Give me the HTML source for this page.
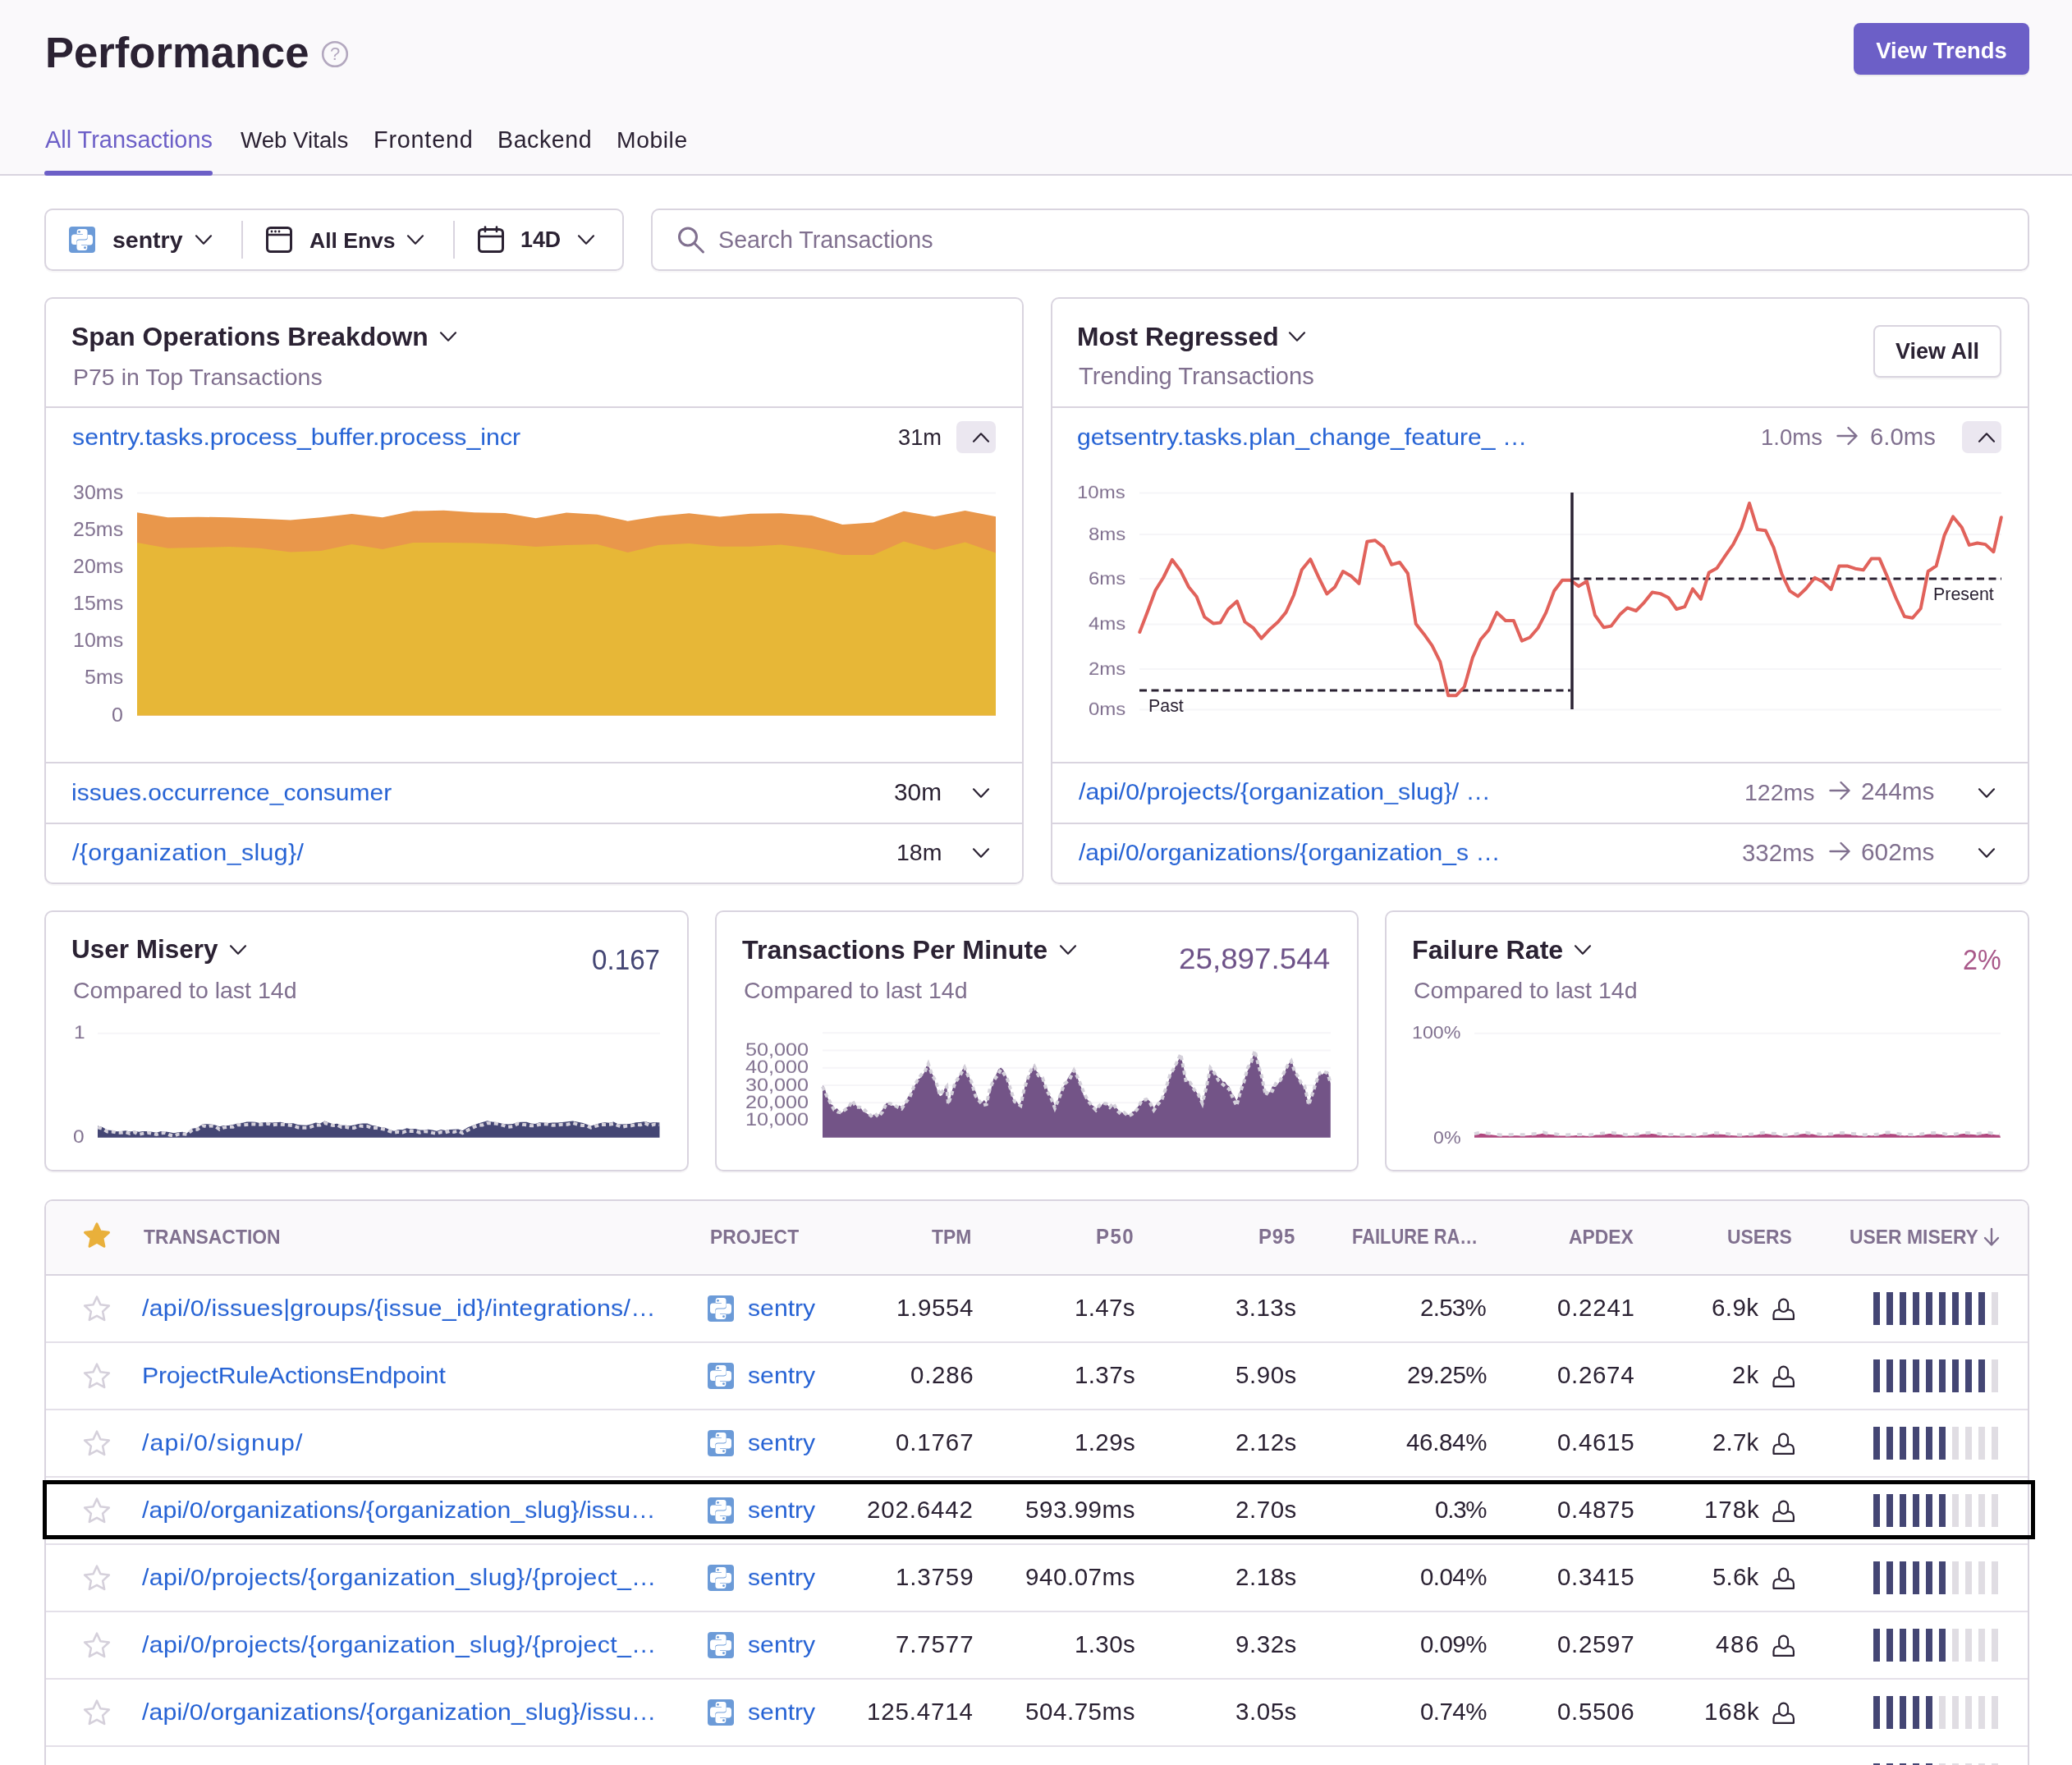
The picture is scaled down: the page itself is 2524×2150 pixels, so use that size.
<!DOCTYPE html>
<html><head><meta charset="utf-8"><title>Performance</title>
<style>
html,body{margin:0;padding:0;}
body{width:2524px;height:2150px;overflow:hidden;position:relative;background:#fff;font-family:"Liberation Sans",sans-serif;}
.t{position:absolute;white-space:nowrap;line-height:1;will-change:transform;}
svg.ov{position:absolute;left:0;top:0;}
</style></head><body>
<div style="position:absolute;left:0px;top:0px;width:2524px;height:214px;box-sizing:border-box;background:#FAF9FB;border-bottom:2px solid #D9D4DF;"></div><div style="position:absolute;left:2258px;top:28px;width:214px;height:63px;box-sizing:border-box;background:#6C5FC7;border-radius:8px;box-shadow:0 2px 0 rgba(43,34,51,0.08);"></div><div style="position:absolute;left:54px;top:208px;width:205px;height:6px;box-sizing:border-box;background:#6C5FC7;border-radius:3px;"></div><div style="position:absolute;left:54px;top:254px;width:706px;height:76px;box-sizing:border-box;border:2px solid #D9D4DF;border-radius:10px;box-shadow:0 2px 0 rgba(43,34,51,0.04);"></div><div style="position:absolute;left:294px;top:269px;width:2px;height:46px;box-sizing:border-box;background:#D9D4DF;"></div><div style="position:absolute;left:552px;top:269px;width:2px;height:46px;box-sizing:border-box;background:#D9D4DF;"></div><div style="position:absolute;left:793px;top:254px;width:1679px;height:76px;box-sizing:border-box;border:2px solid #D9D4DF;border-radius:10px;box-shadow:0 2px 0 rgba(43,34,51,0.04);"></div><div style="position:absolute;left:54px;top:362px;width:1193px;height:715px;box-sizing:border-box;border:2px solid #D9D4DF;border-radius:10px;box-shadow:0 2px 0 rgba(43,34,51,0.04);"></div><div style="position:absolute;left:56px;top:495px;width:1189px;height:2px;box-sizing:border-box;background:#D9D4DF;"></div><div style="position:absolute;left:1165px;top:513px;width:48px;height:39px;box-sizing:border-box;background:#EBE7F0;border-radius:7px;"></div><div style="position:absolute;left:56px;top:928px;width:1189px;height:2px;box-sizing:border-box;background:#D9D4DF;"></div><div style="position:absolute;left:56px;top:1002px;width:1189px;height:2px;box-sizing:border-box;background:#D9D4DF;"></div><div style="position:absolute;left:1280px;top:362px;width:1192px;height:715px;box-sizing:border-box;border:2px solid #D9D4DF;border-radius:10px;box-shadow:0 2px 0 rgba(43,34,51,0.04);"></div><div style="position:absolute;left:2282px;top:396px;width:156px;height:64px;box-sizing:border-box;border:2px solid #D9D4DF;border-radius:8px;box-shadow:0 2px 2px rgba(43,34,51,0.06);background:#fff;"></div><div style="position:absolute;left:1282px;top:495px;width:1188px;height:2px;box-sizing:border-box;background:#D9D4DF;"></div><div style="position:absolute;left:2390px;top:513px;width:48px;height:39px;box-sizing:border-box;background:#EBE7F0;border-radius:7px;"></div><div style="position:absolute;left:1282px;top:928px;width:1188px;height:2px;box-sizing:border-box;background:#D9D4DF;"></div><div style="position:absolute;left:1282px;top:1002px;width:1188px;height:2px;box-sizing:border-box;background:#D9D4DF;"></div><div style="position:absolute;left:54px;top:1109px;width:785px;height:318px;box-sizing:border-box;border:2px solid #D9D4DF;border-radius:10px;box-shadow:0 2px 0 rgba(43,34,51,0.04);"></div><div style="position:absolute;left:871px;top:1109px;width:784px;height:318px;box-sizing:border-box;border:2px solid #D9D4DF;border-radius:10px;box-shadow:0 2px 0 rgba(43,34,51,0.04);"></div><div style="position:absolute;left:1687px;top:1109px;width:785px;height:318px;box-sizing:border-box;border:2px solid #D9D4DF;border-radius:10px;box-shadow:0 2px 0 rgba(43,34,51,0.04);"></div><div style="position:absolute;left:54px;top:1461px;width:2418px;height:800px;box-sizing:border-box;border:2px solid #D9D4DF;border-radius:10px;box-shadow:0 2px 0 rgba(43,34,51,0.04);"></div><div style="position:absolute;left:56px;top:1463px;width:2414px;height:90px;box-sizing:border-box;background:#FAF9FB;border-radius:8px 8px 0 0;"></div><div style="position:absolute;left:56px;top:1552px;width:2414px;height:2px;box-sizing:border-box;background:#D9D4DF;"></div><div style="position:absolute;left:2282px;top:1574px;width:8px;height:40px;box-sizing:border-box;background:#444674;"></div><div style="position:absolute;left:2298px;top:1574px;width:8px;height:40px;box-sizing:border-box;background:#444674;"></div><div style="position:absolute;left:2314px;top:1574px;width:8px;height:40px;box-sizing:border-box;background:#444674;"></div><div style="position:absolute;left:2330px;top:1574px;width:8px;height:40px;box-sizing:border-box;background:#444674;"></div><div style="position:absolute;left:2346px;top:1574px;width:8px;height:40px;box-sizing:border-box;background:#444674;"></div><div style="position:absolute;left:2362px;top:1574px;width:8px;height:40px;box-sizing:border-box;background:#444674;"></div><div style="position:absolute;left:2378px;top:1574px;width:8px;height:40px;box-sizing:border-box;background:#444674;"></div><div style="position:absolute;left:2394px;top:1574px;width:8px;height:40px;box-sizing:border-box;background:#444674;"></div><div style="position:absolute;left:2410px;top:1574px;width:8px;height:40px;box-sizing:border-box;background:#444674;"></div><div style="position:absolute;left:2426px;top:1574px;width:8px;height:40px;box-sizing:border-box;background:#E0DDE3;"></div><div style="position:absolute;left:56px;top:1634px;width:2414px;height:2px;box-sizing:border-box;background:#E4E0E9;"></div><div style="position:absolute;left:2282px;top:1656px;width:8px;height:40px;box-sizing:border-box;background:#444674;"></div><div style="position:absolute;left:2298px;top:1656px;width:8px;height:40px;box-sizing:border-box;background:#444674;"></div><div style="position:absolute;left:2314px;top:1656px;width:8px;height:40px;box-sizing:border-box;background:#444674;"></div><div style="position:absolute;left:2330px;top:1656px;width:8px;height:40px;box-sizing:border-box;background:#444674;"></div><div style="position:absolute;left:2346px;top:1656px;width:8px;height:40px;box-sizing:border-box;background:#444674;"></div><div style="position:absolute;left:2362px;top:1656px;width:8px;height:40px;box-sizing:border-box;background:#444674;"></div><div style="position:absolute;left:2378px;top:1656px;width:8px;height:40px;box-sizing:border-box;background:#444674;"></div><div style="position:absolute;left:2394px;top:1656px;width:8px;height:40px;box-sizing:border-box;background:#444674;"></div><div style="position:absolute;left:2410px;top:1656px;width:8px;height:40px;box-sizing:border-box;background:#444674;"></div><div style="position:absolute;left:2426px;top:1656px;width:8px;height:40px;box-sizing:border-box;background:#E0DDE3;"></div><div style="position:absolute;left:56px;top:1716px;width:2414px;height:2px;box-sizing:border-box;background:#E4E0E9;"></div><div style="position:absolute;left:2282px;top:1738px;width:8px;height:40px;box-sizing:border-box;background:#444674;"></div><div style="position:absolute;left:2298px;top:1738px;width:8px;height:40px;box-sizing:border-box;background:#444674;"></div><div style="position:absolute;left:2314px;top:1738px;width:8px;height:40px;box-sizing:border-box;background:#444674;"></div><div style="position:absolute;left:2330px;top:1738px;width:8px;height:40px;box-sizing:border-box;background:#444674;"></div><div style="position:absolute;left:2346px;top:1738px;width:8px;height:40px;box-sizing:border-box;background:#444674;"></div><div style="position:absolute;left:2362px;top:1738px;width:8px;height:40px;box-sizing:border-box;background:#444674;"></div><div style="position:absolute;left:2378px;top:1738px;width:8px;height:40px;box-sizing:border-box;background:#E0DDE3;"></div><div style="position:absolute;left:2394px;top:1738px;width:8px;height:40px;box-sizing:border-box;background:#E0DDE3;"></div><div style="position:absolute;left:2410px;top:1738px;width:8px;height:40px;box-sizing:border-box;background:#E0DDE3;"></div><div style="position:absolute;left:2426px;top:1738px;width:8px;height:40px;box-sizing:border-box;background:#E0DDE3;"></div><div style="position:absolute;left:56px;top:1798px;width:2414px;height:2px;box-sizing:border-box;background:#E4E0E9;"></div><div style="position:absolute;left:2282px;top:1820px;width:8px;height:40px;box-sizing:border-box;background:#444674;"></div><div style="position:absolute;left:2298px;top:1820px;width:8px;height:40px;box-sizing:border-box;background:#444674;"></div><div style="position:absolute;left:2314px;top:1820px;width:8px;height:40px;box-sizing:border-box;background:#444674;"></div><div style="position:absolute;left:2330px;top:1820px;width:8px;height:40px;box-sizing:border-box;background:#444674;"></div><div style="position:absolute;left:2346px;top:1820px;width:8px;height:40px;box-sizing:border-box;background:#444674;"></div><div style="position:absolute;left:2362px;top:1820px;width:8px;height:40px;box-sizing:border-box;background:#444674;"></div><div style="position:absolute;left:2378px;top:1820px;width:8px;height:40px;box-sizing:border-box;background:#E0DDE3;"></div><div style="position:absolute;left:2394px;top:1820px;width:8px;height:40px;box-sizing:border-box;background:#E0DDE3;"></div><div style="position:absolute;left:2410px;top:1820px;width:8px;height:40px;box-sizing:border-box;background:#E0DDE3;"></div><div style="position:absolute;left:2426px;top:1820px;width:8px;height:40px;box-sizing:border-box;background:#E0DDE3;"></div><div style="position:absolute;left:56px;top:1880px;width:2414px;height:2px;box-sizing:border-box;background:#E4E0E9;"></div><div style="position:absolute;left:2282px;top:1902px;width:8px;height:40px;box-sizing:border-box;background:#444674;"></div><div style="position:absolute;left:2298px;top:1902px;width:8px;height:40px;box-sizing:border-box;background:#444674;"></div><div style="position:absolute;left:2314px;top:1902px;width:8px;height:40px;box-sizing:border-box;background:#444674;"></div><div style="position:absolute;left:2330px;top:1902px;width:8px;height:40px;box-sizing:border-box;background:#444674;"></div><div style="position:absolute;left:2346px;top:1902px;width:8px;height:40px;box-sizing:border-box;background:#444674;"></div><div style="position:absolute;left:2362px;top:1902px;width:8px;height:40px;box-sizing:border-box;background:#444674;"></div><div style="position:absolute;left:2378px;top:1902px;width:8px;height:40px;box-sizing:border-box;background:#E0DDE3;"></div><div style="position:absolute;left:2394px;top:1902px;width:8px;height:40px;box-sizing:border-box;background:#E0DDE3;"></div><div style="position:absolute;left:2410px;top:1902px;width:8px;height:40px;box-sizing:border-box;background:#E0DDE3;"></div><div style="position:absolute;left:2426px;top:1902px;width:8px;height:40px;box-sizing:border-box;background:#E0DDE3;"></div><div style="position:absolute;left:56px;top:1962px;width:2414px;height:2px;box-sizing:border-box;background:#E4E0E9;"></div><div style="position:absolute;left:2282px;top:1984px;width:8px;height:40px;box-sizing:border-box;background:#444674;"></div><div style="position:absolute;left:2298px;top:1984px;width:8px;height:40px;box-sizing:border-box;background:#444674;"></div><div style="position:absolute;left:2314px;top:1984px;width:8px;height:40px;box-sizing:border-box;background:#444674;"></div><div style="position:absolute;left:2330px;top:1984px;width:8px;height:40px;box-sizing:border-box;background:#444674;"></div><div style="position:absolute;left:2346px;top:1984px;width:8px;height:40px;box-sizing:border-box;background:#444674;"></div><div style="position:absolute;left:2362px;top:1984px;width:8px;height:40px;box-sizing:border-box;background:#444674;"></div><div style="position:absolute;left:2378px;top:1984px;width:8px;height:40px;box-sizing:border-box;background:#E0DDE3;"></div><div style="position:absolute;left:2394px;top:1984px;width:8px;height:40px;box-sizing:border-box;background:#E0DDE3;"></div><div style="position:absolute;left:2410px;top:1984px;width:8px;height:40px;box-sizing:border-box;background:#E0DDE3;"></div><div style="position:absolute;left:2426px;top:1984px;width:8px;height:40px;box-sizing:border-box;background:#E0DDE3;"></div><div style="position:absolute;left:56px;top:2044px;width:2414px;height:2px;box-sizing:border-box;background:#E4E0E9;"></div><div style="position:absolute;left:2282px;top:2066px;width:8px;height:40px;box-sizing:border-box;background:#444674;"></div><div style="position:absolute;left:2298px;top:2066px;width:8px;height:40px;box-sizing:border-box;background:#444674;"></div><div style="position:absolute;left:2314px;top:2066px;width:8px;height:40px;box-sizing:border-box;background:#444674;"></div><div style="position:absolute;left:2330px;top:2066px;width:8px;height:40px;box-sizing:border-box;background:#444674;"></div><div style="position:absolute;left:2346px;top:2066px;width:8px;height:40px;box-sizing:border-box;background:#444674;"></div><div style="position:absolute;left:2362px;top:2066px;width:8px;height:40px;box-sizing:border-box;background:#E0DDE3;"></div><div style="position:absolute;left:2378px;top:2066px;width:8px;height:40px;box-sizing:border-box;background:#E0DDE3;"></div><div style="position:absolute;left:2394px;top:2066px;width:8px;height:40px;box-sizing:border-box;background:#E0DDE3;"></div><div style="position:absolute;left:2410px;top:2066px;width:8px;height:40px;box-sizing:border-box;background:#E0DDE3;"></div><div style="position:absolute;left:2426px;top:2066px;width:8px;height:40px;box-sizing:border-box;background:#E0DDE3;"></div><div style="position:absolute;left:56px;top:2126px;width:2414px;height:2px;box-sizing:border-box;background:#E4E0E9;"></div><div style="position:absolute;left:2282px;top:2148px;width:8px;height:40px;box-sizing:border-box;background:#444674;"></div><div style="position:absolute;left:2298px;top:2148px;width:8px;height:40px;box-sizing:border-box;background:#444674;"></div><div style="position:absolute;left:2314px;top:2148px;width:8px;height:40px;box-sizing:border-box;background:#444674;"></div><div style="position:absolute;left:2330px;top:2148px;width:8px;height:40px;box-sizing:border-box;background:#444674;"></div><div style="position:absolute;left:2346px;top:2148px;width:8px;height:40px;box-sizing:border-box;background:#444674;"></div><div style="position:absolute;left:2362px;top:2148px;width:8px;height:40px;box-sizing:border-box;background:#E0DDE3;"></div><div style="position:absolute;left:2378px;top:2148px;width:8px;height:40px;box-sizing:border-box;background:#E0DDE3;"></div><div style="position:absolute;left:2394px;top:2148px;width:8px;height:40px;box-sizing:border-box;background:#E0DDE3;"></div><div style="position:absolute;left:2410px;top:2148px;width:8px;height:40px;box-sizing:border-box;background:#E0DDE3;"></div><div style="position:absolute;left:2426px;top:2148px;width:8px;height:40px;box-sizing:border-box;background:#E0DDE3;"></div>
<svg class="ov" width="2524" height="2150" viewBox="0 0 2524 2150">
<circle cx="408" cy="66" r="14.8" fill="none" stroke="#B3A8BF" stroke-width="2.6"/><g transform="translate(84,276) scale(1.0)"><rect x="0" y="0" width="32" height="32" rx="4" fill="#6C9BD8"/><path d="M16.9 9.4 L9.7 9.4 L9.7 6.2 Q9.7 3 12.9 3 L19.3 3 Q22.5 3 22.5 6.2 L22.5 12.3 Q22.5 15.5 19.3 15.5 L12.5 15.5 Q9.2 15.5 9.2 18.8 L9.2 21.9 L6.2 21.9 Q3 21.9 3 18.4 L3 13.2 Q3 9.6 6.4 9.6 Z" fill="#fff"/><path d="M16.9 9.4 L9.7 9.4 L9.7 6.2 Q9.7 3 12.9 3 L19.3 3 Q22.5 3 22.5 6.2 L22.5 12.3 Q22.5 15.5 19.3 15.5 L12.5 15.5 Q9.2 15.5 9.2 18.8 L9.2 21.9 L6.2 21.9 Q3 21.9 3 18.4 L3 13.2 Q3 9.6 6.4 9.6 Z" fill="#fff" transform="rotate(180 16 16)"/><line x1="9.7" y1="9.5" x2="16.9" y2="9.5" stroke="#6C9BD8" stroke-width="0.7"/><line x1="15.1" y1="22.5" x2="22.3" y2="22.5" stroke="#6C9BD8" stroke-width="0.7"/><circle cx="12.5" cy="6.3" r="1.4" fill="#6C9BD8"/><circle cx="19.5" cy="25.7" r="1.4" fill="#6C9BD8"/></g><polyline points="239,287.3 248.0,296.7 257,287.3" fill="none" stroke="#2B2233" stroke-width="2.2" stroke-linecap="round" stroke-linejoin="round"/><rect x="325.5" y="277.5" width="29" height="29" rx="4" fill="none" stroke="#2B2233" stroke-width="3"/><line x1="325.5" y1="286" x2="354.5" y2="286" stroke="#2B2233" stroke-width="2.6"/><circle cx="331" cy="282" r="1.4" fill="#2B2233"/><circle cx="335.5" cy="282" r="1.4" fill="#2B2233"/><circle cx="340" cy="282" r="1.4" fill="#2B2233"/><polyline points="497,287.3 506.0,296.7 515,287.3" fill="none" stroke="#2B2233" stroke-width="2.2" stroke-linecap="round" stroke-linejoin="round"/><rect x="583.5" y="279.5" width="29" height="27" rx="4" fill="none" stroke="#2B2233" stroke-width="3"/><line x1="583.5" y1="288" x2="612.5" y2="288" stroke="#2B2233" stroke-width="2.6"/><line x1="591" y1="276.5" x2="591" y2="282" stroke="#2B2233" stroke-width="2.6" stroke-linecap="round"/><line x1="605" y1="276.5" x2="605" y2="282" stroke="#2B2233" stroke-width="2.6" stroke-linecap="round"/><polyline points="705,287.3 714.0,296.7 723,287.3" fill="none" stroke="#2B2233" stroke-width="2.2" stroke-linecap="round" stroke-linejoin="round"/><circle cx="838" cy="288.5" r="10.5" fill="none" stroke="#80708F" stroke-width="3"/><line x1="846" y1="296.5" x2="856.5" y2="307" stroke="#80708F" stroke-width="3" stroke-linecap="round"/><polyline points="537,405.3 546.0,414.7 555,405.3" fill="none" stroke="#2B2233" stroke-width="2.2" stroke-linecap="round" stroke-linejoin="round"/><polyline points="1186,537.6999999999999 1195.0,528.3 1204,537.6999999999999" fill="none" stroke="#2B2233" stroke-width="2.2" stroke-linecap="round" stroke-linejoin="round"/><line x1="167" y1="600.5" x2="1213" y2="600.5" stroke="#F6F5F8" stroke-width="2"/><line x1="167" y1="645.6" x2="1213" y2="645.6" stroke="#F6F5F8" stroke-width="2"/><line x1="167" y1="690.8" x2="1213" y2="690.8" stroke="#F6F5F8" stroke-width="2"/><line x1="167" y1="736" x2="1213" y2="736" stroke="#F6F5F8" stroke-width="2"/><line x1="167" y1="781" x2="1213" y2="781" stroke="#F6F5F8" stroke-width="2"/><line x1="167" y1="826" x2="1213" y2="826" stroke="#F6F5F8" stroke-width="2"/><polygon points="167.0,624.3 204.4,630.2 241.7,629.7 279.1,630.2 316.4,631.7 353.8,633.5 391.1,630.2 428.5,626 465.9,630.2 503.2,622.5 540.6,621.7 577.9,624.3 615.3,625 652.6,631.2 690.0,624.6 727.4,626.8 764.7,634.7 802.1,628.7 839.4,625.3 876.8,629.4 914.1,625.8 951.5,625.3 988.9,628.1 1026.2,639 1063.6,636.5 1100.9,622.7 1138.3,629.2 1175.6,621.9 1213.0,629.2 1213,871.5 167,871.5" fill="#E9974B"/><polygon points="167.0,660.9 204.4,667.8 241.7,667 279.1,666 316.4,667.8 353.8,672.4 391.1,671.1 428.5,662.9 465.9,669 503.2,660.9 540.6,660.9 577.9,661.4 615.3,662.9 652.6,666 690.0,664 727.4,663 764.7,673 802.1,664.1 839.4,662 876.8,665.7 914.1,665.7 951.5,663.6 988.9,668.3 1026.2,676 1063.6,676 1100.9,659.4 1138.3,669.8 1175.6,660.5 1213.0,673.5 1213,871.5 167,871.5" fill="#E7B737"/><polyline points="1186,961.3 1195.0,970.6999999999999 1204,961.3" fill="none" stroke="#2B2233" stroke-width="2.2" stroke-linecap="round" stroke-linejoin="round"/><polyline points="1186,1034.3 1195.0,1043.7 1204,1034.3" fill="none" stroke="#2B2233" stroke-width="2.2" stroke-linecap="round" stroke-linejoin="round"/><polyline points="1571,405.3 1580.0,414.7 1589,405.3" fill="none" stroke="#2B2233" stroke-width="2.2" stroke-linecap="round" stroke-linejoin="round"/><path d="M2238.5 531 L2261.5 531 M2251.5 521 L2261.5 531 L2251.5 541" fill="none" stroke="#80708F" stroke-width="2.4" stroke-linecap="round" stroke-linejoin="round"/><polyline points="2411,537.6999999999999 2420.0,528.3 2429,537.6999999999999" fill="none" stroke="#2B2233" stroke-width="2.2" stroke-linecap="round" stroke-linejoin="round"/><line x1="1388" y1="600.5" x2="2438" y2="600.5" stroke="#F6F5F8" stroke-width="2"/><line x1="1388" y1="651" x2="2438" y2="651" stroke="#F6F5F8" stroke-width="2"/><line x1="1388" y1="705" x2="2438" y2="705" stroke="#F6F5F8" stroke-width="2"/><line x1="1388" y1="760.6" x2="2438" y2="760.6" stroke="#F6F5F8" stroke-width="2"/><line x1="1388" y1="815" x2="2438" y2="815" stroke="#F6F5F8" stroke-width="2"/><line x1="1388" y1="864.6" x2="2438" y2="864.6" stroke="#F6F5F8" stroke-width="2"/><line x1="1388" y1="841" x2="1913" y2="841" stroke="#2B2233" stroke-width="3" stroke-dasharray="9 5.5"/><line x1="1915" y1="705" x2="2438" y2="705" stroke="#2B2233" stroke-width="3" stroke-dasharray="9 5.5"/><polyline points="1388.3,770 1397.9,745 1407.5,719 1417.2,703.5 1427.8,681.8 1438.4,695.8 1448,715 1457.6,726.7 1467.3,751.7 1477.9,759.4 1486.5,758.5 1496.2,742 1506.8,732.4 1516.4,757.5 1527,765.2 1536.6,777.7 1546.3,767.1 1556.9,757.5 1566.5,745.9 1576.1,724.7 1585.8,693.9 1596.2,681.2 1606.4,703.4 1616.3,723.4 1626.2,714.9 1636,696 1645.9,701.7 1655.4,710.8 1665.3,659.8 1675.1,658.2 1685.3,666.4 1695.2,687.8 1705,685 1714.9,698.5 1724.8,760.1 1734.6,772.4 1744.5,786.4 1754.3,806.1 1764.2,847.2 1774,847.2 1783.9,836.5 1793.8,801.2 1803.6,779 1813.5,767.5 1823.4,746.1 1834,756 1843.9,756 1853.8,780.6 1863.6,776.5 1873.5,765 1883.3,746.1 1893.2,719.8 1903.1,706.7 1912.9,706.7 1923.1,714.1 1933,708 1942.9,749.4 1953.5,764.2 1962.6,762.6 1973.3,748.6 1982.3,740.4 1993,744 2002.9,733.8 2012.7,721.5 2022.6,723.1 2032.4,728 2042.3,742 2052.2,739.2 2062,717.4 2071.9,729.7 2081.7,697.6 2091.6,691.9 2101.5,677.1 2111.3,663.1 2121.2,643.4 2131,613 2140.9,645.1 2150.7,646.2 2160.6,667.2 2170.5,699.3 2180.3,719.8 2190.2,726.4 2200,717 2210.7,703.8 2220.6,708.8 2230.5,718 2240.3,689.4 2250.1,689.4 2260,692.7 2269.8,694.3 2279.7,680.4 2289.5,680.4 2299.4,703.4 2309.3,728 2319.9,751 2329.8,752.7 2339.7,741.2 2348.7,696 2358.6,689.4 2368.4,652.4 2379.1,629.4 2389.8,642.6 2398.8,663.9 2408.7,661.5 2418.5,663.1 2428.4,672.2 2437.8,630.3" fill="none" stroke="#E1625B" stroke-width="4" stroke-linejoin="round" stroke-linecap="round"/><line x1="1915" y1="600" x2="1915" y2="864" stroke="#2B2233" stroke-width="3.5"/><path d="M2229.5 963 L2252.5 963 M2242.5 953 L2252.5 963 L2242.5 973" fill="none" stroke="#80708F" stroke-width="2.4" stroke-linecap="round" stroke-linejoin="round"/><polyline points="2411,961.3 2420.0,970.6999999999999 2429,961.3" fill="none" stroke="#2B2233" stroke-width="2.2" stroke-linecap="round" stroke-linejoin="round"/><path d="M2229.5 1037 L2252.5 1037 M2242.5 1027 L2252.5 1037 L2242.5 1047" fill="none" stroke="#80708F" stroke-width="2.4" stroke-linecap="round" stroke-linejoin="round"/><polyline points="2411,1034.3 2420.0,1043.7 2429,1034.3" fill="none" stroke="#2B2233" stroke-width="2.2" stroke-linecap="round" stroke-linejoin="round"/><polyline points="281,1152.3 290.0,1161.7 299,1152.3" fill="none" stroke="#2B2233" stroke-width="2.2" stroke-linecap="round" stroke-linejoin="round"/><line x1="119" y1="1258.7" x2="804" y2="1258.7" stroke="#F6F5F8" stroke-width="2"/><polygon points="119.0,1371.4 124.8,1373.0 130.7,1376.4 136.5,1376.9 142.0,1378.2 147.4,1377.9 152.9,1377.3 158.3,1378.6 163.8,1377.5 169.2,1378.7 174.7,1377.9 180.0,1377.9 185.3,1378.8 190.6,1379.8 195.9,1378.0 201.2,1378.3 206.6,1379.3 211.9,1380.2 217.2,1379.2 222.5,1378.7 227.8,1380.2 234.2,1374.7 240.5,1373.7 246.9,1369.2 252.0,1369.2 257.1,1369.6 262.2,1370.5 267.3,1372.3 272.4,1371.1 278.2,1371.0 284.0,1370.1 289.9,1368.3 295.7,1367.7 300.8,1366.4 305.9,1366.4 311.0,1366.7 316.1,1367.9 321.2,1367.2 326.3,1366.9 331.4,1367.5 336.5,1367.2 341.6,1366.7 346.7,1368.0 352.0,1368.5 357.3,1368.2 362.6,1369.9 367.9,1370.6 373.4,1370.7 378.9,1369.5 384.5,1367.5 390.0,1368.5 395.5,1365.5 400.6,1367.4 405.7,1369.3 410.8,1368.8 415.9,1370.8 421.0,1370.7 426.3,1371.3 431.6,1370.4 436.9,1368.9 442.2,1368.6 447.6,1368.4 453.0,1370.7 458.4,1371.7 463.8,1372.9 469.2,1373.8 474.6,1376.1 480.0,1377.7 485.2,1376.1 490.4,1376.2 495.6,1374.3 500.8,1375.6 506.0,1375.1 511.2,1376.5 516.4,1376.6 521.6,1375.8 526.8,1376.6 532.0,1377.8 537.2,1376.0 542.5,1377.0 547.7,1376.1 552.9,1375.8 558.2,1375.5 563.4,1377.2 570.3,1372.9 577.3,1370.6 582.5,1368.4 587.7,1367.0 593.5,1365.2 599.2,1366.5 605.0,1367.0 612.0,1368.8 619.0,1369.5 624.8,1369.0 630.6,1366.9 636.4,1366.7 641.6,1366.8 646.8,1368.5 652.0,1369.0 657.2,1367.2 662.4,1367.6 667.6,1368.0 673.4,1367.4 679.2,1367.5 685.0,1367.1 691.4,1366.3 697.7,1365.6 704.1,1366.7 709.3,1367.7 714.5,1369.4 719.7,1371.6 725.5,1369.7 731.3,1368.1 737.1,1367.2 742.3,1367.8 747.5,1366.6 752.8,1369.3 758.0,1369.4 763.6,1369.3 769.1,1368.8 774.7,1367.3 780.2,1367.0 785.8,1365.9 791.7,1367.8 797.6,1367.0 803.5,1367.6 803.5,1385.7 119,1385.7" fill="#444674"/><polyline points="119.0,1373.4 124.8,1374.9 130.7,1378.5 136.5,1378.5 142.0,1379.7 147.4,1379.7 152.9,1379.0 158.3,1380.8 163.8,1379.1 169.2,1381.9 174.7,1380.6 180.0,1379.7 185.3,1380.8 190.6,1382.0 195.9,1380.3 201.2,1380.0 206.6,1382.5 211.9,1383.7 217.2,1381.6 222.5,1381.2 227.8,1381.9 234.2,1376.4 240.5,1375.9 246.9,1371.2 252.0,1372.4 257.1,1371.4 262.2,1372.1 267.3,1375.7 272.4,1373.6 278.2,1372.8 284.0,1372.7 289.9,1369.9 295.7,1370.3 300.8,1369.9 305.9,1369.6 311.0,1369.6 316.1,1369.9 321.2,1369.4 326.3,1368.7 331.4,1370.6 336.5,1369.7 341.6,1369.8 346.7,1370.1 352.0,1370.5 357.3,1371.3 362.6,1373.3 367.9,1373.8 373.4,1373.8 378.9,1372.6 384.5,1370.5 390.0,1370.5 395.5,1368.0 400.6,1369.6 405.7,1370.9 410.8,1370.4 415.9,1372.9 421.0,1372.7 426.3,1374.1 431.6,1373.9 436.9,1371.3 442.2,1372.0 447.6,1371.9 453.0,1374.1 458.4,1373.9 463.8,1374.8 469.2,1375.8 474.6,1378.0 480.0,1379.6 485.2,1378.8 490.4,1379.5 495.6,1377.5 500.8,1378.0 506.0,1377.9 511.2,1379.6 516.4,1378.3 521.6,1378.6 526.8,1379.9 532.0,1380.9 537.2,1379.0 542.5,1379.5 547.7,1377.9 552.9,1378.9 558.2,1377.7 563.4,1380.3 570.3,1376.4 577.3,1372.9 582.5,1370.7 587.7,1370.4 593.5,1368.2 599.2,1368.3 605.0,1368.8 612.0,1370.6 619.0,1372.8 624.8,1372.2 630.6,1368.7 636.4,1369.8 641.6,1370.3 646.8,1371.3 652.0,1371.2 657.2,1369.8 662.4,1369.3 667.6,1369.5 673.4,1370.8 679.2,1370.3 685.0,1369.7 691.4,1369.7 697.7,1368.0 704.1,1369.9 709.3,1370.9 714.5,1371.3 719.7,1373.6 725.5,1371.8 731.3,1370.1 737.1,1369.9 742.3,1369.8 747.5,1369.0 752.8,1371.1 758.0,1372.7 763.6,1371.5 769.1,1371.2 774.7,1370.0 780.2,1370.3 785.8,1368.2 791.7,1371.2 797.6,1369.5 803.5,1370.1" fill="none" stroke="#D4D0DA" stroke-width="4" stroke-dasharray="5 4"/><polyline points="1292,1152.3 1301.0,1161.7 1310,1152.3" fill="none" stroke="#2B2233" stroke-width="2.2" stroke-linecap="round" stroke-linejoin="round"/><line x1="1002" y1="1258.3" x2="1621" y2="1258.3" stroke="#F6F5F8" stroke-width="2"/><line x1="1002" y1="1279.5" x2="1621" y2="1279.5" stroke="#F6F5F8" stroke-width="2"/><line x1="1002" y1="1300.8" x2="1621" y2="1300.8" stroke="#F6F5F8" stroke-width="2"/><line x1="1002" y1="1322" x2="1621" y2="1322" stroke="#F6F5F8" stroke-width="2"/><line x1="1002" y1="1343.2" x2="1621" y2="1343.2" stroke="#F6F5F8" stroke-width="2"/><polygon points="1002.0,1321.8 1005.2,1327.6 1008.5,1338.1 1011.7,1345.1 1014.4,1345.9 1017.0,1351.5 1019.7,1350.0 1022.3,1353.2 1025.0,1356.1 1027.7,1352.9 1030.3,1349.4 1033.0,1348.1 1035.6,1345.9 1038.3,1344.7 1040.9,1343.2 1043.6,1347.4 1046.2,1347.8 1048.8,1349.8 1051.4,1354.2 1054.1,1354.8 1056.7,1357.0 1059.4,1358.3 1062.0,1359.4 1064.7,1357.4 1067.3,1358.5 1070.0,1358.3 1072.5,1354.6 1075.0,1351.8 1077.5,1346.8 1080.0,1343.5 1082.6,1343.9 1085.2,1346.9 1087.8,1346.4 1090.5,1348.0 1093.1,1349.1 1095.7,1346.4 1098.3,1348.6 1100.8,1347.2 1103.3,1343.3 1105.8,1336.5 1108.3,1333.1 1110.8,1330.1 1113.3,1323.7 1115.8,1320.0 1118.3,1314.6 1120.8,1313.5 1123.3,1310.1 1125.8,1306.7 1128.3,1299.0 1130.8,1297.8 1133.9,1305.3 1136.9,1310.4 1140.0,1321.9 1142.5,1330.7 1145.0,1335.3 1147.8,1334.0 1150.5,1326.2 1153.3,1321.6 1155.0,1345.7 1157.8,1337.2 1160.5,1326.1 1163.3,1319.7 1166.2,1315.1 1169.2,1309.2 1172.1,1303.5 1175.0,1299.1 1177.8,1307.8 1180.5,1310.9 1183.3,1320.3 1185.8,1325.5 1188.3,1329.2 1190.8,1336.6 1193.3,1343.9 1196.1,1342.8 1198.9,1340.1 1201.7,1344.1 1204.5,1334.8 1207.2,1327.4 1210.0,1314.7 1213.1,1309.7 1216.1,1302.7 1219.2,1300.6 1221.7,1302.8 1224.2,1306.7 1226.7,1312.9 1229.7,1325.4 1232.8,1334.9 1235.8,1342.1 1238.3,1341.5 1240.8,1345.4 1243.3,1343.7 1246.1,1334.3 1248.9,1321.2 1251.7,1311.1 1254.5,1309.2 1257.2,1302.9 1260.0,1296.2 1262.5,1304.7 1265.0,1307.3 1267.5,1312.3 1270.0,1312.9 1272.5,1322.1 1275.0,1323.4 1277.5,1332.7 1280.0,1335.9 1282.5,1340.6 1285.0,1347.0 1287.9,1342.6 1290.8,1333.0 1293.8,1326.1 1296.7,1321.8 1299.6,1315.8 1302.5,1310.5 1305.4,1306.2 1308.3,1301.1 1311.2,1309.3 1314.2,1317.4 1317.1,1324.8 1320.0,1334.6 1322.5,1335.6 1325.0,1340.0 1327.5,1341.7 1330.0,1345.9 1332.5,1347.6 1335.0,1352.1 1337.7,1347.9 1340.4,1348.5 1343.1,1344.7 1345.7,1343.3 1348.4,1345.2 1351.0,1348.0 1353.7,1344.4 1356.3,1348.4 1358.9,1348.6 1361.5,1351.1 1364.2,1354.9 1366.8,1354.8 1369.4,1357.5 1372.7,1357.6 1375.9,1358.2 1379.2,1354.2 1382.1,1353.4 1385.0,1349.5 1387.8,1345.9 1390.7,1341.4 1393.6,1339.9 1396.5,1337.2 1399.5,1340.6 1402.5,1343.3 1405.5,1349.7 1408.8,1344.5 1412.0,1341.3 1415.3,1338.2 1418.6,1332.1 1421.9,1322.4 1425.2,1311.6 1428.1,1305.5 1430.9,1301.2 1434.6,1293.3 1438.3,1285.9 1441.6,1299.1 1444.9,1315.3 1448.2,1317.1 1451.4,1323.4 1454.7,1326.2 1458.0,1331.2 1461.3,1336.8 1464.6,1347.5 1467.9,1330.0 1471.1,1316.0 1474.4,1300.0 1477.7,1305.2 1480.9,1309.0 1484.2,1312.4 1486.8,1313.5 1489.5,1317.7 1492.1,1317.8 1494.8,1321.7 1497.4,1323.4 1500.4,1331.0 1503.4,1335.2 1506.4,1341.1 1509.4,1333.2 1512.4,1323.6 1515.4,1316.0 1518.0,1308.5 1520.7,1302.4 1523.3,1294.7 1526.0,1287.8 1528.6,1281.4 1531.3,1288.8 1534.1,1298.4 1536.8,1311.5 1541.7,1333.5 1544.4,1333.2 1547.2,1329.5 1549.9,1323.2 1553.2,1323.9 1556.4,1320.9 1559.7,1316.2 1562.3,1311.7 1565.0,1307.0 1567.6,1298.6 1570.3,1295.4 1572.9,1290.2 1575.6,1299.3 1578.4,1306.5 1581.1,1314.0 1583.8,1316.6 1586.6,1322.0 1589.3,1324.7 1594.2,1346.2 1596.8,1336.6 1599.4,1328.4 1602.1,1321.7 1604.7,1315.6 1607.3,1307.1 1610.6,1309.1 1613.9,1306.1 1617.2,1304.8 1620.8,1319.5 1620.8,1385.7 1002,1385.7" fill="#735487"/><polyline points="1002.0,1323.5 1006.9,1334.6 1011.7,1343.7 1016.1,1352.1 1020.6,1354.5 1025.0,1355.5 1029.4,1351.8 1033.9,1348.8 1038.3,1340.8 1042.9,1348.8 1047.5,1348.8 1052.1,1350.9 1056.7,1355.6 1061.1,1359.3 1065.6,1356.2 1070.0,1360.5 1075.0,1354.6 1080.0,1343.8 1084.6,1344.2 1089.2,1346.2 1093.7,1348.8 1098.3,1350.7 1103.3,1343.0 1108.3,1336.5 1113.3,1323.4 1118.3,1314.7 1122.5,1308.8 1126.6,1305.6 1130.8,1295.8 1135.4,1309.3 1140.0,1317.1 1145.0,1334.1 1149.2,1328.1 1153.3,1323.4 1155.0,1345.1 1159.2,1333.4 1163.3,1319.0 1169.2,1310.6 1175.0,1300.3 1179.2,1310.3 1183.3,1317.8 1188.3,1334.9 1193.3,1341.7 1197.5,1346.3 1201.7,1345.3 1205.8,1326.3 1210.0,1316.9 1214.6,1310.7 1219.2,1303.0 1226.7,1313.4 1231.2,1327.2 1235.8,1341.8 1243.3,1346.9 1247.5,1326.8 1251.7,1314.4 1255.8,1303.8 1260.0,1299.0 1265.0,1310.3 1270.0,1312.9 1275.0,1328.3 1280.0,1336.7 1285.0,1349.9 1290.8,1336.1 1296.7,1320.3 1302.5,1315.8 1308.3,1303.7 1314.2,1315.5 1320.0,1330.3 1325.0,1340.4 1330.0,1346.8 1335.0,1352.4 1339.0,1346.8 1343.1,1343.8 1347.5,1344.4 1351.9,1348.9 1356.3,1343.8 1360.7,1352.6 1365.0,1356.8 1369.4,1355.3 1374.3,1359.7 1379.2,1357.0 1385.0,1351.8 1390.7,1340.9 1396.5,1339.0 1401.0,1343.7 1405.5,1352.5 1410.4,1345.5 1415.3,1339.8 1420.2,1325.5 1425.2,1309.6 1430.9,1299.8 1438.3,1283.8 1444.9,1318.4 1449.8,1318.7 1454.7,1327.3 1459.7,1333.2 1464.6,1344.1 1469.5,1324.4 1474.4,1300.8 1479.3,1307.1 1484.2,1316.1 1488.6,1320.0 1493.0,1323.8 1497.4,1326.9 1501.9,1337.9 1506.4,1347.1 1510.9,1330.4 1515.4,1317.6 1519.8,1300.9 1524.2,1293.7 1528.6,1279.7 1532.7,1296.6 1536.8,1310.6 1541.7,1334.3 1545.8,1327.7 1549.9,1329.0 1554.8,1318.4 1559.7,1315.9 1564.1,1306.5 1568.5,1297.8 1572.9,1292.4 1577.0,1305.1 1581.1,1311.2 1585.2,1319.7 1589.3,1322.9 1594.2,1346.1 1598.6,1332.9 1602.9,1319.3 1607.3,1307.2 1612.2,1305.1 1617.2,1307.5 1620.8,1319.4" fill="none" stroke="#D4D0DA" stroke-width="4" stroke-dasharray="5 4"/><polyline points="1919,1152.3 1928.0,1161.7 1937,1152.3" fill="none" stroke="#2B2233" stroke-width="2.2" stroke-linecap="round" stroke-linejoin="round"/><line x1="1796" y1="1258.7" x2="2437" y2="1258.7" stroke="#F6F5F8" stroke-width="2"/><polygon points="1796,1382.3 1800,1381.4 1804,1380.8 1808,1381.2 1812,1381.8 1816,1382.3 1820,1382.8 1824,1383.2 1828,1383.6 1832,1383.6 1836,1383.5 1840,1383.4 1844,1383.2 1848,1383.3 1852,1383.5 1856,1383.5 1860,1383.3 1864,1382.9 1868,1382.4 1872,1382.1 1876,1381.5 1880,1380.6 1884,1381.6 1888,1381.9 1892,1382.3 1896,1382.6 1900,1383.5 1904,1383.5 1908,1383.6 1912,1383.5 1916,1383.4 1920,1383.1 1924,1383.2 1928,1383.2 1932,1383.7 1936,1383.7 1940,1383.2 1944,1382.6 1948,1382.4 1952,1381.8 1956,1381.7 1960,1381.0 1964,1381.1 1968,1381.7 1972,1382.1 1976,1382.5 1980,1383.5 1984,1383.6 1988,1383.6 1992,1383.0 1996,1382.5 2000,1381.8 2004,1381.5 2008,1381.1 2012,1381.0 2016,1381.6 2020,1382.1 2024,1382.9 2028,1382.9 2032,1383.6 2036,1383.1 2040,1383.3 2044,1383.5 2048,1383.6 2052,1383.5 2056,1383.3 2060,1383.3 2064,1383.6 2068,1383.7 2072,1383.0 2076,1382.5 2080,1382.2 2084,1381.8 2088,1381.1 2092,1381.4 2096,1381.7 2100,1382.1 2104,1382.3 2108,1383.0 2112,1383.2 2116,1383.4 2120,1383.6 2124,1383.6 2128,1383.1 2132,1382.9 2136,1382.7 2140,1382.4 2144,1381.6 2148,1381.0 2152,1381.2 2156,1381.8 2160,1382.0 2164,1382.3 2168,1383.2 2172,1383.7 2176,1383.5 2180,1383.3 2184,1382.7 2188,1382.5 2192,1381.7 2196,1381.2 2200,1380.9 2204,1381.6 2208,1381.6 2212,1382.5 2216,1382.6 2220,1383.5 2224,1383.6 2228,1382.8 2232,1382.6 2236,1381.7 2240,1381.5 2244,1381.2 2248,1381.4 2252,1381.8 2256,1382.1 2260,1382.4 2264,1383.4 2268,1383.5 2272,1383.6 2276,1383.1 2280,1383.5 2284,1383.1 2288,1382.6 2292,1381.9 2296,1381.1 2300,1380.7 2304,1381.2 2308,1381.6 2312,1382.1 2316,1382.9 2320,1383.5 2324,1383.1 2328,1383.3 2332,1383.7 2336,1383.1 2340,1382.8 2344,1382.3 2348,1381.8 2352,1381.5 2356,1381.3 2360,1381.6 2364,1382.1 2368,1382.2 2372,1383.2 2376,1382.9 2380,1382.9 2384,1382.3 2388,1381.5 2392,1381.1 2396,1381.1 2400,1381.8 2404,1382.0 2408,1382.4 2412,1381.6 2416,1381.6 2420,1381.0 2424,1381.1 2428,1382.1 2432,1382.4 2436,1382.6 2437,1385.7 1796,1385.7" fill="#B0487F"/><polyline points="1796,1381.1 1800,1380.2 1804,1379.6 1808,1380.0 1812,1380.6 1816,1381.1 1820,1381.6 1824,1382.0 1828,1382.4 1832,1382.4 1836,1382.3 1840,1382.2 1844,1382.0 1848,1382.1 1852,1382.3 1856,1382.3 1860,1382.1 1864,1381.7 1868,1381.2 1872,1380.9 1876,1380.3 1880,1379.4 1884,1380.4 1888,1380.7 1892,1381.1 1896,1381.4 1900,1382.3 1904,1382.3 1908,1382.4 1912,1382.3 1916,1382.2 1920,1381.9 1924,1382.0 1928,1382.0 1932,1382.5 1936,1382.5 1940,1382.0 1944,1381.4 1948,1381.2 1952,1380.6 1956,1380.5 1960,1379.8 1964,1379.9 1968,1380.5 1972,1380.9 1976,1381.3 1980,1382.3 1984,1382.4 1988,1382.4 1992,1381.8 1996,1381.3 2000,1380.6 2004,1380.3 2008,1379.9 2012,1379.8 2016,1380.4 2020,1380.9 2024,1381.7 2028,1381.7 2032,1382.4 2036,1381.9 2040,1382.1 2044,1382.3 2048,1382.4 2052,1382.3 2056,1382.1 2060,1382.1 2064,1382.4 2068,1382.5 2072,1381.8 2076,1381.3 2080,1381.0 2084,1380.6 2088,1379.9 2092,1380.2 2096,1380.5 2100,1380.9 2104,1381.1 2108,1381.8 2112,1382.0 2116,1382.2 2120,1382.4 2124,1382.4 2128,1381.9 2132,1381.7 2136,1381.5 2140,1381.2 2144,1380.4 2148,1379.8 2152,1380.0 2156,1380.6 2160,1380.8 2164,1381.1 2168,1382.0 2172,1382.5 2176,1382.3 2180,1382.1 2184,1381.5 2188,1381.3 2192,1380.5 2196,1380.0 2200,1379.7 2204,1380.4 2208,1380.4 2212,1381.3 2216,1381.4 2220,1382.3 2224,1382.4 2228,1381.6 2232,1381.4 2236,1380.5 2240,1380.3 2244,1380.0 2248,1380.2 2252,1380.6 2256,1380.9 2260,1381.2 2264,1382.2 2268,1382.3 2272,1382.4 2276,1381.9 2280,1382.3 2284,1381.9 2288,1381.4 2292,1380.7 2296,1379.9 2300,1379.5 2304,1380.0 2308,1380.4 2312,1380.9 2316,1381.7 2320,1382.3 2324,1381.9 2328,1382.1 2332,1382.5 2336,1381.9 2340,1381.6 2344,1381.1 2348,1380.6 2352,1380.3 2356,1380.1 2360,1380.4 2364,1380.9 2368,1381.0 2372,1382.0 2376,1381.7 2380,1381.7 2384,1381.1 2388,1380.3 2392,1379.9 2396,1379.9 2400,1380.6 2404,1380.8 2408,1381.2 2412,1380.4 2416,1380.4 2420,1379.8 2424,1379.9 2428,1380.9 2432,1381.2 2436,1381.4" fill="none" stroke="#D9D5DE" stroke-width="4" stroke-dasharray="6 8"/><polygon points="118.00,1490.80 122.29,1500.10 132.46,1501.30 124.94,1508.25 126.93,1518.30 118.00,1513.30 109.07,1518.30 111.06,1508.25 103.54,1501.30 113.71,1500.10" fill="#E9B03B" stroke="#E9B03B" stroke-width="3" stroke-linejoin="round"/><path d="M2426 1497 L2426 1516 M2418 1508 L2426 1516.5 L2434 1508" fill="none" stroke="#80708F" stroke-width="2.4" stroke-linecap="round" stroke-linejoin="round"/><polygon points="118.00,1579.70 122.40,1589.24 132.84,1590.48 125.12,1597.61 127.17,1607.92 118.00,1602.79 108.83,1607.92 110.88,1597.61 103.16,1590.48 113.60,1589.24" fill="none" stroke="#D5D0DB" stroke-width="2.6" stroke-linejoin="round"/><g transform="translate(862,1578) scale(1.0)"><rect x="0" y="0" width="32" height="32" rx="4" fill="#6C9BD8"/><path d="M16.9 9.4 L9.7 9.4 L9.7 6.2 Q9.7 3 12.9 3 L19.3 3 Q22.5 3 22.5 6.2 L22.5 12.3 Q22.5 15.5 19.3 15.5 L12.5 15.5 Q9.2 15.5 9.2 18.8 L9.2 21.9 L6.2 21.9 Q3 21.9 3 18.4 L3 13.2 Q3 9.6 6.4 9.6 Z" fill="#fff"/><path d="M16.9 9.4 L9.7 9.4 L9.7 6.2 Q9.7 3 12.9 3 L19.3 3 Q22.5 3 22.5 6.2 L22.5 12.3 Q22.5 15.5 19.3 15.5 L12.5 15.5 Q9.2 15.5 9.2 18.8 L9.2 21.9 L6.2 21.9 Q3 21.9 3 18.4 L3 13.2 Q3 9.6 6.4 9.6 Z" fill="#fff" transform="rotate(180 16 16)"/><line x1="9.7" y1="9.5" x2="16.9" y2="9.5" stroke="#6C9BD8" stroke-width="0.7"/><line x1="15.1" y1="22.5" x2="22.3" y2="22.5" stroke="#6C9BD8" stroke-width="0.7"/><circle cx="12.5" cy="6.3" r="1.4" fill="#6C9BD8"/><circle cx="19.5" cy="25.7" r="1.4" fill="#6C9BD8"/></g><path d="M2160.5 1606.8 L2160.5 1601.5 Q2160.5 1595.5 2166.8 1595.5 L2178.3 1595.5 Q2184.9 1595.5 2184.9 1601.5 L2184.9 1606.8 Z" fill="none" stroke="#2B2233" stroke-width="2.2" stroke-linejoin="round"/><rect x="2167.2000000000003" y="1582.6" width="10.8" height="15.4" rx="5.4" ry="5.6" fill="#fff" stroke="#2B2233" stroke-width="2.2"/><polygon points="118.00,1661.70 122.40,1671.24 132.84,1672.48 125.12,1679.61 127.17,1689.92 118.00,1684.79 108.83,1689.92 110.88,1679.61 103.16,1672.48 113.60,1671.24" fill="none" stroke="#D5D0DB" stroke-width="2.6" stroke-linejoin="round"/><g transform="translate(862,1660) scale(1.0)"><rect x="0" y="0" width="32" height="32" rx="4" fill="#6C9BD8"/><path d="M16.9 9.4 L9.7 9.4 L9.7 6.2 Q9.7 3 12.9 3 L19.3 3 Q22.5 3 22.5 6.2 L22.5 12.3 Q22.5 15.5 19.3 15.5 L12.5 15.5 Q9.2 15.5 9.2 18.8 L9.2 21.9 L6.2 21.9 Q3 21.9 3 18.4 L3 13.2 Q3 9.6 6.4 9.6 Z" fill="#fff"/><path d="M16.9 9.4 L9.7 9.4 L9.7 6.2 Q9.7 3 12.9 3 L19.3 3 Q22.5 3 22.5 6.2 L22.5 12.3 Q22.5 15.5 19.3 15.5 L12.5 15.5 Q9.2 15.5 9.2 18.8 L9.2 21.9 L6.2 21.9 Q3 21.9 3 18.4 L3 13.2 Q3 9.6 6.4 9.6 Z" fill="#fff" transform="rotate(180 16 16)"/><line x1="9.7" y1="9.5" x2="16.9" y2="9.5" stroke="#6C9BD8" stroke-width="0.7"/><line x1="15.1" y1="22.5" x2="22.3" y2="22.5" stroke="#6C9BD8" stroke-width="0.7"/><circle cx="12.5" cy="6.3" r="1.4" fill="#6C9BD8"/><circle cx="19.5" cy="25.7" r="1.4" fill="#6C9BD8"/></g><path d="M2160.5 1688.8 L2160.5 1683.5 Q2160.5 1677.5 2166.8 1677.5 L2178.3 1677.5 Q2184.9 1677.5 2184.9 1683.5 L2184.9 1688.8 Z" fill="none" stroke="#2B2233" stroke-width="2.2" stroke-linejoin="round"/><rect x="2167.2000000000003" y="1664.6" width="10.8" height="15.4" rx="5.4" ry="5.6" fill="#fff" stroke="#2B2233" stroke-width="2.2"/><polygon points="118.00,1743.70 122.40,1753.24 132.84,1754.48 125.12,1761.61 127.17,1771.92 118.00,1766.79 108.83,1771.92 110.88,1761.61 103.16,1754.48 113.60,1753.24" fill="none" stroke="#D5D0DB" stroke-width="2.6" stroke-linejoin="round"/><g transform="translate(862,1742) scale(1.0)"><rect x="0" y="0" width="32" height="32" rx="4" fill="#6C9BD8"/><path d="M16.9 9.4 L9.7 9.4 L9.7 6.2 Q9.7 3 12.9 3 L19.3 3 Q22.5 3 22.5 6.2 L22.5 12.3 Q22.5 15.5 19.3 15.5 L12.5 15.5 Q9.2 15.5 9.2 18.8 L9.2 21.9 L6.2 21.9 Q3 21.9 3 18.4 L3 13.2 Q3 9.6 6.4 9.6 Z" fill="#fff"/><path d="M16.9 9.4 L9.7 9.4 L9.7 6.2 Q9.7 3 12.9 3 L19.3 3 Q22.5 3 22.5 6.2 L22.5 12.3 Q22.5 15.5 19.3 15.5 L12.5 15.5 Q9.2 15.5 9.2 18.8 L9.2 21.9 L6.2 21.9 Q3 21.9 3 18.4 L3 13.2 Q3 9.6 6.4 9.6 Z" fill="#fff" transform="rotate(180 16 16)"/><line x1="9.7" y1="9.5" x2="16.9" y2="9.5" stroke="#6C9BD8" stroke-width="0.7"/><line x1="15.1" y1="22.5" x2="22.3" y2="22.5" stroke="#6C9BD8" stroke-width="0.7"/><circle cx="12.5" cy="6.3" r="1.4" fill="#6C9BD8"/><circle cx="19.5" cy="25.7" r="1.4" fill="#6C9BD8"/></g><path d="M2160.5 1770.8 L2160.5 1765.5 Q2160.5 1759.5 2166.8 1759.5 L2178.3 1759.5 Q2184.9 1759.5 2184.9 1765.5 L2184.9 1770.8 Z" fill="none" stroke="#2B2233" stroke-width="2.2" stroke-linejoin="round"/><rect x="2167.2000000000003" y="1746.6" width="10.8" height="15.4" rx="5.4" ry="5.6" fill="#fff" stroke="#2B2233" stroke-width="2.2"/><polygon points="118.00,1825.70 122.40,1835.24 132.84,1836.48 125.12,1843.61 127.17,1853.92 118.00,1848.79 108.83,1853.92 110.88,1843.61 103.16,1836.48 113.60,1835.24" fill="none" stroke="#D5D0DB" stroke-width="2.6" stroke-linejoin="round"/><g transform="translate(862,1824) scale(1.0)"><rect x="0" y="0" width="32" height="32" rx="4" fill="#6C9BD8"/><path d="M16.9 9.4 L9.7 9.4 L9.7 6.2 Q9.7 3 12.9 3 L19.3 3 Q22.5 3 22.5 6.2 L22.5 12.3 Q22.5 15.5 19.3 15.5 L12.5 15.5 Q9.2 15.5 9.2 18.8 L9.2 21.9 L6.2 21.9 Q3 21.9 3 18.4 L3 13.2 Q3 9.6 6.4 9.6 Z" fill="#fff"/><path d="M16.9 9.4 L9.7 9.4 L9.7 6.2 Q9.7 3 12.9 3 L19.3 3 Q22.5 3 22.5 6.2 L22.5 12.3 Q22.5 15.5 19.3 15.5 L12.5 15.5 Q9.2 15.5 9.2 18.8 L9.2 21.9 L6.2 21.9 Q3 21.9 3 18.4 L3 13.2 Q3 9.6 6.4 9.6 Z" fill="#fff" transform="rotate(180 16 16)"/><line x1="9.7" y1="9.5" x2="16.9" y2="9.5" stroke="#6C9BD8" stroke-width="0.7"/><line x1="15.1" y1="22.5" x2="22.3" y2="22.5" stroke="#6C9BD8" stroke-width="0.7"/><circle cx="12.5" cy="6.3" r="1.4" fill="#6C9BD8"/><circle cx="19.5" cy="25.7" r="1.4" fill="#6C9BD8"/></g><path d="M2160.5 1852.8 L2160.5 1847.5 Q2160.5 1841.5 2166.8 1841.5 L2178.3 1841.5 Q2184.9 1841.5 2184.9 1847.5 L2184.9 1852.8 Z" fill="none" stroke="#2B2233" stroke-width="2.2" stroke-linejoin="round"/><rect x="2167.2000000000003" y="1828.6" width="10.8" height="15.4" rx="5.4" ry="5.6" fill="#fff" stroke="#2B2233" stroke-width="2.2"/><polygon points="118.00,1907.70 122.40,1917.24 132.84,1918.48 125.12,1925.61 127.17,1935.92 118.00,1930.79 108.83,1935.92 110.88,1925.61 103.16,1918.48 113.60,1917.24" fill="none" stroke="#D5D0DB" stroke-width="2.6" stroke-linejoin="round"/><g transform="translate(862,1906) scale(1.0)"><rect x="0" y="0" width="32" height="32" rx="4" fill="#6C9BD8"/><path d="M16.9 9.4 L9.7 9.4 L9.7 6.2 Q9.7 3 12.9 3 L19.3 3 Q22.5 3 22.5 6.2 L22.5 12.3 Q22.5 15.5 19.3 15.5 L12.5 15.5 Q9.2 15.5 9.2 18.8 L9.2 21.9 L6.2 21.9 Q3 21.9 3 18.4 L3 13.2 Q3 9.6 6.4 9.6 Z" fill="#fff"/><path d="M16.9 9.4 L9.7 9.4 L9.7 6.2 Q9.7 3 12.9 3 L19.3 3 Q22.5 3 22.5 6.2 L22.5 12.3 Q22.5 15.5 19.3 15.5 L12.5 15.5 Q9.2 15.5 9.2 18.8 L9.2 21.9 L6.2 21.9 Q3 21.9 3 18.4 L3 13.2 Q3 9.6 6.4 9.6 Z" fill="#fff" transform="rotate(180 16 16)"/><line x1="9.7" y1="9.5" x2="16.9" y2="9.5" stroke="#6C9BD8" stroke-width="0.7"/><line x1="15.1" y1="22.5" x2="22.3" y2="22.5" stroke="#6C9BD8" stroke-width="0.7"/><circle cx="12.5" cy="6.3" r="1.4" fill="#6C9BD8"/><circle cx="19.5" cy="25.7" r="1.4" fill="#6C9BD8"/></g><path d="M2160.5 1934.8 L2160.5 1929.5 Q2160.5 1923.5 2166.8 1923.5 L2178.3 1923.5 Q2184.9 1923.5 2184.9 1929.5 L2184.9 1934.8 Z" fill="none" stroke="#2B2233" stroke-width="2.2" stroke-linejoin="round"/><rect x="2167.2000000000003" y="1910.6" width="10.8" height="15.4" rx="5.4" ry="5.6" fill="#fff" stroke="#2B2233" stroke-width="2.2"/><polygon points="118.00,1989.70 122.40,1999.24 132.84,2000.48 125.12,2007.61 127.17,2017.92 118.00,2012.79 108.83,2017.92 110.88,2007.61 103.16,2000.48 113.60,1999.24" fill="none" stroke="#D5D0DB" stroke-width="2.6" stroke-linejoin="round"/><g transform="translate(862,1988) scale(1.0)"><rect x="0" y="0" width="32" height="32" rx="4" fill="#6C9BD8"/><path d="M16.9 9.4 L9.7 9.4 L9.7 6.2 Q9.7 3 12.9 3 L19.3 3 Q22.5 3 22.5 6.2 L22.5 12.3 Q22.5 15.5 19.3 15.5 L12.5 15.5 Q9.2 15.5 9.2 18.8 L9.2 21.9 L6.2 21.9 Q3 21.9 3 18.4 L3 13.2 Q3 9.6 6.4 9.6 Z" fill="#fff"/><path d="M16.9 9.4 L9.7 9.4 L9.7 6.2 Q9.7 3 12.9 3 L19.3 3 Q22.5 3 22.5 6.2 L22.5 12.3 Q22.5 15.5 19.3 15.5 L12.5 15.5 Q9.2 15.5 9.2 18.8 L9.2 21.9 L6.2 21.9 Q3 21.9 3 18.4 L3 13.2 Q3 9.6 6.4 9.6 Z" fill="#fff" transform="rotate(180 16 16)"/><line x1="9.7" y1="9.5" x2="16.9" y2="9.5" stroke="#6C9BD8" stroke-width="0.7"/><line x1="15.1" y1="22.5" x2="22.3" y2="22.5" stroke="#6C9BD8" stroke-width="0.7"/><circle cx="12.5" cy="6.3" r="1.4" fill="#6C9BD8"/><circle cx="19.5" cy="25.7" r="1.4" fill="#6C9BD8"/></g><path d="M2160.5 2016.8 L2160.5 2011.5 Q2160.5 2005.5 2166.8 2005.5 L2178.3 2005.5 Q2184.9 2005.5 2184.9 2011.5 L2184.9 2016.8 Z" fill="none" stroke="#2B2233" stroke-width="2.2" stroke-linejoin="round"/><rect x="2167.2000000000003" y="1992.6" width="10.8" height="15.4" rx="5.4" ry="5.6" fill="#fff" stroke="#2B2233" stroke-width="2.2"/><polygon points="118.00,2071.70 122.40,2081.24 132.84,2082.48 125.12,2089.61 127.17,2099.92 118.00,2094.79 108.83,2099.92 110.88,2089.61 103.16,2082.48 113.60,2081.24" fill="none" stroke="#D5D0DB" stroke-width="2.6" stroke-linejoin="round"/><g transform="translate(862,2070) scale(1.0)"><rect x="0" y="0" width="32" height="32" rx="4" fill="#6C9BD8"/><path d="M16.9 9.4 L9.7 9.4 L9.7 6.2 Q9.7 3 12.9 3 L19.3 3 Q22.5 3 22.5 6.2 L22.5 12.3 Q22.5 15.5 19.3 15.5 L12.5 15.5 Q9.2 15.5 9.2 18.8 L9.2 21.9 L6.2 21.9 Q3 21.9 3 18.4 L3 13.2 Q3 9.6 6.4 9.6 Z" fill="#fff"/><path d="M16.9 9.4 L9.7 9.4 L9.7 6.2 Q9.7 3 12.9 3 L19.3 3 Q22.5 3 22.5 6.2 L22.5 12.3 Q22.5 15.5 19.3 15.5 L12.5 15.5 Q9.2 15.5 9.2 18.8 L9.2 21.9 L6.2 21.9 Q3 21.9 3 18.4 L3 13.2 Q3 9.6 6.4 9.6 Z" fill="#fff" transform="rotate(180 16 16)"/><line x1="9.7" y1="9.5" x2="16.9" y2="9.5" stroke="#6C9BD8" stroke-width="0.7"/><line x1="15.1" y1="22.5" x2="22.3" y2="22.5" stroke="#6C9BD8" stroke-width="0.7"/><circle cx="12.5" cy="6.3" r="1.4" fill="#6C9BD8"/><circle cx="19.5" cy="25.7" r="1.4" fill="#6C9BD8"/></g><path d="M2160.5 2098.8 L2160.5 2093.5 Q2160.5 2087.5 2166.8 2087.5 L2178.3 2087.5 Q2184.9 2087.5 2184.9 2093.5 L2184.9 2098.8 Z" fill="none" stroke="#2B2233" stroke-width="2.2" stroke-linejoin="round"/><rect x="2167.2000000000003" y="2074.6" width="10.8" height="15.4" rx="5.4" ry="5.6" fill="#fff" stroke="#2B2233" stroke-width="2.2"/><polygon points="118.00,2153.70 122.40,2163.24 132.84,2164.48 125.12,2171.61 127.17,2181.92 118.00,2176.79 108.83,2181.92 110.88,2171.61 103.16,2164.48 113.60,2163.24" fill="none" stroke="#D5D0DB" stroke-width="2.6" stroke-linejoin="round"/><g transform="translate(862,2152) scale(1.0)"><rect x="0" y="0" width="32" height="32" rx="4" fill="#6C9BD8"/><path d="M16.9 9.4 L9.7 9.4 L9.7 6.2 Q9.7 3 12.9 3 L19.3 3 Q22.5 3 22.5 6.2 L22.5 12.3 Q22.5 15.5 19.3 15.5 L12.5 15.5 Q9.2 15.5 9.2 18.8 L9.2 21.9 L6.2 21.9 Q3 21.9 3 18.4 L3 13.2 Q3 9.6 6.4 9.6 Z" fill="#fff"/><path d="M16.9 9.4 L9.7 9.4 L9.7 6.2 Q9.7 3 12.9 3 L19.3 3 Q22.5 3 22.5 6.2 L22.5 12.3 Q22.5 15.5 19.3 15.5 L12.5 15.5 Q9.2 15.5 9.2 18.8 L9.2 21.9 L6.2 21.9 Q3 21.9 3 18.4 L3 13.2 Q3 9.6 6.4 9.6 Z" fill="#fff" transform="rotate(180 16 16)"/><line x1="9.7" y1="9.5" x2="16.9" y2="9.5" stroke="#6C9BD8" stroke-width="0.7"/><line x1="15.1" y1="22.5" x2="22.3" y2="22.5" stroke="#6C9BD8" stroke-width="0.7"/><circle cx="12.5" cy="6.3" r="1.4" fill="#6C9BD8"/><circle cx="19.5" cy="25.7" r="1.4" fill="#6C9BD8"/></g><path d="M2160.5 2180.8 L2160.5 2175.5 Q2160.5 2169.5 2166.8 2169.5 L2178.3 2169.5 Q2184.9 2169.5 2184.9 2175.5 L2184.9 2180.8 Z" fill="none" stroke="#2B2233" stroke-width="2.2" stroke-linejoin="round"/><rect x="2167.2000000000003" y="2156.6" width="10.8" height="15.4" rx="5.4" ry="5.6" fill="#fff" stroke="#2B2233" stroke-width="2.2"/>
</svg>
<div class="t" style="top:37.5px;font-size:52.6px;color:#2B2233;font-weight:700;left:55.0px;">Performance</div><div class="t" style="top:55.4px;font-size:22px;color:#B3A8BF;left:408.0px;transform:translateX(-50%);">?</div><div class="t" style="top:48.1px;font-size:27.4px;color:#FFFFFF;font-weight:700;left:2365.0px;transform:translateX(-50%);">View Trends</div><div class="t" style="top:155.7px;font-size:28.9px;color:#6C5FC7;left:54.5px;">All Transactions</div><div class="t" style="top:156.8px;font-size:27.7px;color:#2B2233;left:292.9px;">Web Vitals</div><div class="t" style="top:155.8px;font-size:28.8px;color:#2B2233;letter-spacing:0.79px;left:454.8px;">Frontend</div><div class="t" style="top:156.0px;font-size:28.6px;color:#2B2233;letter-spacing:0.57px;left:605.8px;">Backend</div><div class="t" style="top:156.2px;font-size:28.3px;color:#2B2233;letter-spacing:0.56px;left:750.7px;">Mobile</div><div class="t" style="top:277.9px;font-size:28.5px;color:#2B2233;font-weight:700;left:136.5px;">sentry</div><div class="t" style="top:279.6px;font-size:26.5px;color:#2B2233;font-weight:700;left:377.0px;">All Envs</div><div class="t" style="top:279.3px;font-size:26.8px;color:#2B2233;font-weight:700;left:634.0px;">14D</div><div class="t" style="top:277.7px;font-size:28.7px;color:#80708F;left:874.6px;">Search Transactions</div><div class="t" style="top:394.7px;font-size:31.8px;color:#2B2233;font-weight:700;left:86.5px;">Span Operations Breakdown</div><div class="t" style="top:444.9px;font-size:28.5px;color:#80708F;left:88.6px;">P75 in Top Transactions</div><div class="t" style="top:516.7px;font-size:30.3px;color:#2562D4;left:88.4px;transform:scaleY(0.95);transform-origin:0 84.65%;">sentry.tasks.process_buffer.process_incr</div><div class="t" style="top:518.7px;font-size:27.3px;color:#2B2233;right:1376.6px;">31m</div><div class="t" style="top:586.9px;font-size:25px;color:#80708F;right:2373.7px;transform:scaleY(0.95);transform-origin:0 84.65%;">30ms</div><div class="t" style="top:632.0px;font-size:25px;color:#80708F;right:2373.7px;transform:scaleY(0.95);transform-origin:0 84.65%;">25ms</div><div class="t" style="top:677.2px;font-size:25px;color:#80708F;right:2373.7px;transform:scaleY(0.95);transform-origin:0 84.65%;">20ms</div><div class="t" style="top:722.4px;font-size:25px;color:#80708F;right:2373.7px;transform:scaleY(0.95);transform-origin:0 84.65%;">15ms</div><div class="t" style="top:767.4px;font-size:25px;color:#80708F;right:2373.7px;transform:scaleY(0.95);transform-origin:0 84.65%;">10ms</div><div class="t" style="top:812.4px;font-size:25px;color:#80708F;right:2373.7px;transform:scaleY(0.95);transform-origin:0 84.65%;">5ms</div><div class="t" style="top:857.7px;font-size:25px;color:#80708F;right:2373.7px;transform:scaleY(0.95);transform-origin:0 84.65%;">0</div><div class="t" style="top:949.6px;font-size:30.0px;color:#2562D4;left:87.0px;transform:scaleY(0.95);transform-origin:0 84.65%;">issues.occurrence_consumer</div><div class="t" style="top:949.8px;font-size:29.8px;color:#2B2233;right:1376.9px;">30m</div><div class="t" style="top:1022.9px;font-size:30.3px;color:#2562D4;letter-spacing:0.37px;left:88.4px;transform:scaleY(0.95);transform-origin:0 84.65%;">/{organization_slug}/</div><div class="t" style="top:1024.4px;font-size:28.5px;color:#2B2233;right:1376.9px;">18m</div><div class="t" style="top:394.7px;font-size:31.8px;color:#2B2233;font-weight:700;left:1312.0px;">Most Regressed</div><div class="t" style="top:444.4px;font-size:29.1px;color:#80708F;left:1313.5px;">Trending Transactions</div><div class="t" style="top:415.0px;font-size:27px;color:#2B2233;font-weight:700;left:2360.0px;transform:translateX(-50%);">View All</div><div class="t" style="top:516.7px;font-size:30.2px;color:#2562D4;left:1311.5px;transform:scaleY(0.95);transform-origin:0 84.65%;">getsentry.tasks.plan_change_feature_ …</div><div class="t" style="top:518.7px;font-size:27.5px;color:#80708F;right:304.0px;">1.0ms</div><div class="t" style="top:517.2px;font-size:29.3px;color:#80708F;left:2277.6px;">6.0ms</div><div class="t" style="top:587.0px;font-size:24px;color:#80708F;right:1153.0px;transform:scaleY(0.9);transform-origin:0 84.65%;">10ms</div><div class="t" style="top:637.5px;font-size:24px;color:#80708F;right:1153.0px;transform:scaleY(0.9);transform-origin:0 84.65%;">8ms</div><div class="t" style="top:691.5px;font-size:24px;color:#80708F;right:1153.0px;transform:scaleY(0.9);transform-origin:0 84.65%;">6ms</div><div class="t" style="top:747.1px;font-size:24px;color:#80708F;right:1153.0px;transform:scaleY(0.9);transform-origin:0 84.65%;">4ms</div><div class="t" style="top:801.5px;font-size:24px;color:#80708F;right:1153.0px;transform:scaleY(0.9);transform-origin:0 84.65%;">2ms</div><div class="t" style="top:851.1px;font-size:24px;color:#80708F;right:1153.0px;transform:scaleY(0.9);transform-origin:0 84.65%;">0ms</div><div class="t" style="top:850.2px;font-size:21.4px;color:#2B2233;left:1399.4px;">Past</div><div class="t" style="top:713.5px;font-size:21.4px;color:#2B2233;right:95.6px;">Present</div><div class="t" style="top:949.4px;font-size:30.3px;color:#2562D4;left:1314.0px;transform:scaleY(0.95);transform-origin:0 84.65%;">/api/0/projects/{organization_slug}/ …</div><div class="t" style="top:950.5px;font-size:28.5px;color:#80708F;right:313.4px;">122ms</div><div class="t" style="top:949.4px;font-size:29.8px;color:#80708F;left:2267.4px;">244ms</div><div class="t" style="top:1023.0px;font-size:30.1px;color:#2562D4;left:1314.0px;transform:scaleY(0.95);transform-origin:0 84.65%;">/api/0/organizations/{organization_s …</div><div class="t" style="top:1023.5px;font-size:29.4px;color:#80708F;right:313.4px;">332ms</div><div class="t" style="top:1023.2px;font-size:29.8px;color:#80708F;left:2267.4px;">602ms</div><div class="t" style="top:1141.3px;font-size:31.5px;color:#2B2233;font-weight:700;left:87.0px;">User Misery</div><div class="t" style="top:1191.7px;font-size:28.5px;color:#80708F;left:89.0px;">Compared to last 14d</div><div class="t" style="top:1152.7px;font-size:33.2px;color:#444674;right:1719.5px;transform:scaleY(1.08);transform-origin:0 84.65%;">0.167</div><div class="t" style="top:1244.9px;font-size:24.5px;color:#80708F;left:89.5px;transform:scaleY(0.92);transform-origin:0 84.65%;">1</div><div class="t" style="top:1372.3px;font-size:24.5px;color:#80708F;left:88.5px;transform:scaleY(0.92);transform-origin:0 84.65%;">0</div><div class="t" style="top:1140.7px;font-size:32.2px;color:#2B2233;font-weight:700;left:904.0px;">Transactions Per Minute</div><div class="t" style="top:1191.7px;font-size:28.5px;color:#80708F;left:906.0px;">Compared to last 14d</div><div class="t" style="top:1149.6px;font-size:36.8px;color:#6C5087;right:903.5px;transform:scaleY(0.95);transform-origin:0 84.65%;">25,897.544</div><div class="t" style="top:1265.0px;font-size:25.2px;color:#80708F;right:1539.2px;transform:scaleY(0.86);transform-origin:0 84.65%;">50,000</div><div class="t" style="top:1286.3px;font-size:25.2px;color:#80708F;right:1539.2px;transform:scaleY(0.86);transform-origin:0 84.65%;">40,000</div><div class="t" style="top:1307.5px;font-size:25.2px;color:#80708F;right:1539.2px;transform:scaleY(0.86);transform-origin:0 84.65%;">30,000</div><div class="t" style="top:1328.7px;font-size:25.2px;color:#80708F;right:1539.2px;transform:scaleY(0.86);transform-origin:0 84.65%;">20,000</div><div class="t" style="top:1350.0px;font-size:25.2px;color:#80708F;right:1539.2px;transform:scaleY(0.86);transform-origin:0 84.65%;">10,000</div><div class="t" style="top:1140.7px;font-size:32.2px;color:#2B2233;font-weight:700;left:1720.0px;">Failure Rate</div><div class="t" style="top:1191.7px;font-size:28.5px;color:#80708F;left:1722.0px;">Compared to last 14d</div><div class="t" style="top:1153.5px;font-size:32.3px;color:#A9598A;right:86.5px;transform:scaleY(1.08);transform-origin:0 84.65%;">2%</div><div class="t" style="top:1246.2px;font-size:23.2px;color:#80708F;right:744.7px;transform:scaleY(0.88);transform-origin:0 84.65%;">100%</div><div class="t" style="top:1373.9px;font-size:23.2px;color:#80708F;right:744.7px;transform:scaleY(0.88);transform-origin:0 84.65%;">0%</div><div class="t" style="top:1495.7px;font-size:22.9px;color:#80708F;font-weight:700;left:174.6px;transform:scaleY(1.08);transform-origin:0 84.65%;">TRANSACTION</div><div class="t" style="top:1495.7px;font-size:22.9px;color:#80708F;font-weight:700;left:865.4px;transform:scaleY(1.08);transform-origin:0 84.65%;">PROJECT</div><div class="t" style="top:1495.7px;font-size:22.9px;color:#80708F;font-weight:700;right:1340.7px;transform:scaleY(1.08);transform-origin:0 84.65%;">TPM</div><div class="t" style="top:1494.8px;font-size:24px;color:#80708F;letter-spacing:1.5px;margin-right:-1.5px;font-weight:700;right:1143.8px;transform:scaleY(1.07);transform-origin:0 84.65%;">P50</div><div class="t" style="top:1494.8px;font-size:24px;color:#80708F;letter-spacing:0.8px;margin-right:-0.8px;font-weight:700;right:947.0px;transform:scaleY(1.07);transform-origin:0 84.65%;">P95</div><div class="t" style="top:1496.6px;font-size:21.9px;color:#80708F;font-weight:700;left:1647.2px;transform:scaleY(1.17);transform-origin:0 84.65%;">FAILURE RA…</div><div class="t" style="top:1495.7px;font-size:22.9px;color:#80708F;font-weight:700;right:534.2px;transform:scaleY(1.08);transform-origin:0 84.65%;">APDEX</div><div class="t" style="top:1495.7px;font-size:22.9px;color:#80708F;font-weight:700;right:340.8px;transform:scaleY(1.08);transform-origin:0 84.65%;">USERS</div><div class="t" style="top:1495.7px;font-size:22.9px;color:#80708F;font-weight:700;left:2252.6px;transform:scaleY(1.08);transform-origin:0 84.65%;">USER MISERY</div><div class="t" style="top:1577.6px;font-size:30.3px;color:#2562D4;letter-spacing:0.289px;left:172.9px;transform:scaleY(0.95);transform-origin:0 84.65%;">/api/0/issues|groups/{issue_id}/integrations/…</div><div class="t" style="top:1577.6px;font-size:30.2px;color:#2562D4;left:910.7px;transform:scaleY(0.95);transform-origin:0 84.65%;">sentry</div><div class="t" style="top:1578.2px;font-size:29.5px;color:#2B2233;letter-spacing:0.641px;margin-right:-0.641px;right:1338.8px;">1.9554</div><div class="t" style="top:1578.2px;font-size:29.5px;color:#2B2233;letter-spacing:0.325px;margin-right:-0.325px;right:1141.5px;">1.47s</div><div class="t" style="top:1578.2px;font-size:29.5px;color:#2B2233;letter-spacing:0.45px;margin-right:-0.45px;right:944.6px;">3.13s</div><div class="t" style="top:1578.2px;font-size:29.5px;color:#2B2233;letter-spacing:-0.733px;margin-right:0.733px;right:712.9px;">2.53%</div><div class="t" style="top:1578.2px;font-size:29.5px;color:#2B2233;letter-spacing:0.741px;margin-right:-0.741px;right:533.3px;">0.2241</div><div class="t" style="top:1578.2px;font-size:29.5px;color:#2B2233;letter-spacing:0.424px;margin-right:-0.424px;right:381.5px;">6.9k</div><div class="t" style="top:1659.6px;font-size:30.3px;color:#2562D4;letter-spacing:-0.23px;left:172.9px;transform:scaleY(0.95);transform-origin:0 84.65%;">ProjectRuleActionsEndpoint</div><div class="t" style="top:1659.6px;font-size:30.2px;color:#2562D4;left:910.7px;transform:scaleY(0.95);transform-origin:0 84.65%;">sentry</div><div class="t" style="top:1660.2px;font-size:29.5px;color:#2B2233;letter-spacing:0.719px;margin-right:-0.719px;right:1338.8px;">0.286</div><div class="t" style="top:1660.2px;font-size:29.5px;color:#2B2233;letter-spacing:0.375px;margin-right:-0.375px;right:1141.5px;">1.37s</div><div class="t" style="top:1660.2px;font-size:29.5px;color:#2B2233;letter-spacing:0.55px;margin-right:-0.55px;right:944.6px;">5.90s</div><div class="t" style="top:1660.2px;font-size:29.5px;color:#2B2233;letter-spacing:-0.496px;margin-right:0.496px;right:712.9px;">29.25%</div><div class="t" style="top:1660.2px;font-size:29.5px;color:#2B2233;letter-spacing:0.661px;margin-right:-0.661px;right:533.3px;">0.2674</div><div class="t" style="top:1660.2px;font-size:29.5px;color:#2B2233;letter-spacing:1.104px;margin-right:-1.104px;right:381.5px;">2k</div><div class="t" style="top:1741.6px;font-size:30.3px;color:#2562D4;letter-spacing:1.163px;left:172.9px;transform:scaleY(0.95);transform-origin:0 84.65%;">/api/0/signup/</div><div class="t" style="top:1741.6px;font-size:30.2px;color:#2562D4;left:910.7px;transform:scaleY(0.95);transform-origin:0 84.65%;">sentry</div><div class="t" style="top:1742.2px;font-size:29.5px;color:#2B2233;letter-spacing:0.861px;margin-right:-0.861px;right:1338.8px;">0.1767</div><div class="t" style="top:1742.2px;font-size:29.5px;color:#2B2233;letter-spacing:0.375px;margin-right:-0.375px;right:1141.5px;">1.29s</div><div class="t" style="top:1742.2px;font-size:29.5px;color:#2B2233;letter-spacing:0.55px;margin-right:-0.55px;right:944.6px;">2.12s</div><div class="t" style="top:1742.2px;font-size:29.5px;color:#2B2233;letter-spacing:-0.336px;margin-right:0.336px;right:712.9px;">46.84%</div><div class="t" style="top:1742.2px;font-size:29.5px;color:#2B2233;letter-spacing:0.661px;margin-right:-0.661px;right:533.3px;">0.4615</div><div class="t" style="top:1742.2px;font-size:29.5px;color:#2B2233;letter-spacing:0.157px;margin-right:-0.157px;right:381.5px;">2.7k</div><div class="t" style="top:1823.6px;font-size:30.3px;color:#2562D4;letter-spacing:0.089px;left:172.9px;transform:scaleY(0.95);transform-origin:0 84.65%;">/api/0/organizations/{organization_slug}/issu…</div><div class="t" style="top:1823.6px;font-size:30.2px;color:#2562D4;left:910.7px;transform:scaleY(0.95);transform-origin:0 84.65%;">sentry</div><div class="t" style="top:1824.2px;font-size:29.5px;color:#2B2233;letter-spacing:0.841px;margin-right:-0.841px;right:1338.8px;">202.6442</div><div class="t" style="top:1824.2px;font-size:29.5px;color:#2B2233;letter-spacing:0.56px;margin-right:-0.56px;right:1141.5px;">593.99ms</div><div class="t" style="top:1824.2px;font-size:29.5px;color:#2B2233;letter-spacing:0.55px;margin-right:-0.55px;right:944.6px;">2.70s</div><div class="t" style="top:1824.2px;font-size:29.5px;color:#2B2233;letter-spacing:-1.22px;margin-right:1.22px;right:712.9px;">0.3%</div><div class="t" style="top:1824.2px;font-size:29.5px;color:#2B2233;letter-spacing:0.661px;margin-right:-0.661px;right:533.3px;">0.4875</div><div class="t" style="top:1824.2px;font-size:29.5px;color:#2B2233;letter-spacing:0.962px;margin-right:-0.962px;right:381.5px;">178k</div><div class="t" style="top:1905.6px;font-size:30.3px;color:#2562D4;letter-spacing:0.334px;left:172.9px;transform:scaleY(0.95);transform-origin:0 84.65%;">/api/0/projects/{organization_slug}/{project_…</div><div class="t" style="top:1905.6px;font-size:30.2px;color:#2562D4;left:910.7px;transform:scaleY(0.95);transform-origin:0 84.65%;">sentry</div><div class="t" style="top:1906.2px;font-size:29.5px;color:#2B2233;letter-spacing:0.861px;margin-right:-0.861px;right:1338.8px;">1.3759</div><div class="t" style="top:1906.2px;font-size:29.5px;color:#2B2233;letter-spacing:0.56px;margin-right:-0.56px;right:1141.5px;">940.07ms</div><div class="t" style="top:1906.2px;font-size:29.5px;color:#2B2233;letter-spacing:0.55px;margin-right:-0.55px;right:944.6px;">2.18s</div><div class="t" style="top:1906.2px;font-size:29.5px;color:#2B2233;letter-spacing:-0.558px;margin-right:0.558px;right:712.9px;">0.04%</div><div class="t" style="top:1906.2px;font-size:29.5px;color:#2B2233;letter-spacing:0.661px;margin-right:-0.661px;right:533.3px;">0.3415</div><div class="t" style="top:1906.2px;font-size:29.5px;color:#2B2233;letter-spacing:0.157px;margin-right:-0.157px;right:381.5px;">5.6k</div><div class="t" style="top:1987.6px;font-size:30.3px;color:#2562D4;letter-spacing:0.334px;left:172.9px;transform:scaleY(0.95);transform-origin:0 84.65%;">/api/0/projects/{organization_slug}/{project_…</div><div class="t" style="top:1987.6px;font-size:30.2px;color:#2562D4;left:910.7px;transform:scaleY(0.95);transform-origin:0 84.65%;">sentry</div><div class="t" style="top:1988.2px;font-size:29.5px;color:#2B2233;letter-spacing:0.861px;margin-right:-0.861px;right:1338.8px;">7.7577</div><div class="t" style="top:1988.2px;font-size:29.5px;color:#2B2233;letter-spacing:0.375px;margin-right:-0.375px;right:1141.5px;">1.30s</div><div class="t" style="top:1988.2px;font-size:29.5px;color:#2B2233;letter-spacing:0.55px;margin-right:-0.55px;right:944.6px;">9.32s</div><div class="t" style="top:1988.2px;font-size:29.5px;color:#2B2233;letter-spacing:-0.558px;margin-right:0.558px;right:712.9px;">0.09%</div><div class="t" style="top:1988.2px;font-size:29.5px;color:#2B2233;letter-spacing:0.661px;margin-right:-0.661px;right:533.3px;">0.2597</div><div class="t" style="top:1988.2px;font-size:29.5px;color:#2B2233;letter-spacing:1.654px;margin-right:-1.654px;right:381.5px;">486</div><div class="t" style="top:2069.6px;font-size:30.3px;color:#2562D4;letter-spacing:0.109px;left:172.9px;transform:scaleY(0.95);transform-origin:0 84.65%;">/api/0/organizations/{organization_slug}/issu…</div><div class="t" style="top:2069.6px;font-size:30.2px;color:#2562D4;left:910.7px;transform:scaleY(0.95);transform-origin:0 84.65%;">sentry</div><div class="t" style="top:2070.2px;font-size:29.5px;color:#2B2233;letter-spacing:0.841px;margin-right:-0.841px;right:1338.8px;">125.4714</div><div class="t" style="top:2070.2px;font-size:29.5px;color:#2B2233;letter-spacing:0.56px;margin-right:-0.56px;right:1141.5px;">504.75ms</div><div class="t" style="top:2070.2px;font-size:29.5px;color:#2B2233;letter-spacing:0.55px;margin-right:-0.55px;right:944.6px;">3.05s</div><div class="t" style="top:2070.2px;font-size:29.5px;color:#2B2233;letter-spacing:-0.558px;margin-right:0.558px;right:712.9px;">0.74%</div><div class="t" style="top:2070.2px;font-size:29.5px;color:#2B2233;letter-spacing:0.661px;margin-right:-0.661px;right:533.3px;">0.5506</div><div class="t" style="top:2070.2px;font-size:29.5px;color:#2B2233;letter-spacing:0.962px;margin-right:-0.962px;right:381.5px;">168k</div><div class="t" style="top:2151.6px;font-size:30.3px;color:#2562D4;letter-spacing:0.109px;left:172.9px;transform:scaleY(0.95);transform-origin:0 84.65%;">/api/0/organizations/{organization_slug}/issu…</div><div class="t" style="top:2151.6px;font-size:30.2px;color:#2562D4;left:910.7px;transform:scaleY(0.95);transform-origin:0 84.65%;">sentry</div><div class="t" style="top:2152.2px;font-size:29.5px;color:#2B2233;letter-spacing:0.841px;margin-right:-0.841px;right:1338.8px;">125.4714</div><div class="t" style="top:2152.2px;font-size:29.5px;color:#2B2233;letter-spacing:0.56px;margin-right:-0.56px;right:1141.5px;">504.75ms</div><div class="t" style="top:2152.2px;font-size:29.5px;color:#2B2233;letter-spacing:0.55px;margin-right:-0.55px;right:944.6px;">3.05s</div><div class="t" style="top:2152.2px;font-size:29.5px;color:#2B2233;letter-spacing:-0.558px;margin-right:0.558px;right:712.9px;">0.74%</div><div class="t" style="top:2152.2px;font-size:29.5px;color:#2B2233;letter-spacing:0.661px;margin-right:-0.661px;right:533.3px;">0.5506</div><div class="t" style="top:2152.2px;font-size:29.5px;color:#2B2233;letter-spacing:0.962px;margin-right:-0.962px;right:381.5px;">168k</div>
<div style="position:absolute;left:52px;top:1803px;width:2427px;height:72px;box-sizing:border-box;border:5px solid #000;"></div>
</body></html>
